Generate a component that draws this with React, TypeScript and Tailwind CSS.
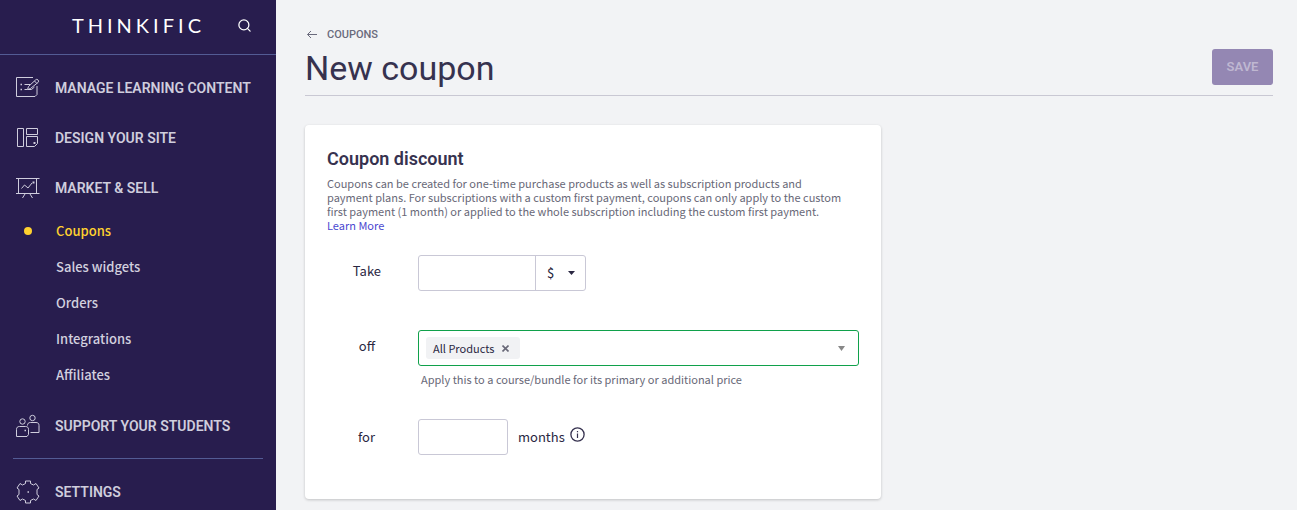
import type { ReactNode } from "react";
import { Search } from "lucide-react";

const bodyFont = "font-['Noto_Sans_CJK_SC',sans-serif]";
const headingFont = "font-['Roboto',sans-serif]";

function NavIcon({ children }: { children: ReactNode }) {
  return (
    <svg
      width="24"
      height="24"
      viewBox="0 0 24 24"
      fill="none"
      stroke="currentColor"
      strokeWidth="1"
      className="shrink-0"
      aria-hidden="true"
    >
      {children}
    </svg>
  );
}

function ContentIcon() {
  return (
    <NavIcon>
      <path d="M17 1.500H.500v19h18.500l2-2V10" />
      <path d="M8.500 8.500H14M8.500 13.500h3" />
      <path d="M4.500 8.500h1.500M4.500 13.500h1.500" strokeWidth="1.500" />
      <path d="M11.500 13.500l1-3 7-6.500a1.700 1.700 0 0 1 2.600 2.400l-7.600 6.100zM18.500 5l2.300 2.400M12 13.500h3.500l3-2.500" />
    </NavIcon>
  );
}

function DesignIcon() {
  return (
    <NavIcon>
      <path d="M1.500 2.500h6v18h-6zM10.500 2.500h11v6h-11zM10.500 10.500h11v7l-3 3h-8z" />
      <path d="M17.500 17h2" strokeWidth="2" />
    </NavIcon>
  );
}

function MarketIcon() {
  return (
    <NavIcon>
      <path d="M0 2.500h23.500M0 17.500h23.500M2.500 2.500v15M20.500 2.500v15" />
      <path d="M5.500 12.500l3-3.500 3.500 3 4-5M9 18l-2.500 4M14 18l2.500 4" />
      <path d="M16.500 6.500h2" strokeWidth="2" />
    </NavIcon>
  );
}

function StudentsIcon() {
  return (
    <NavIcon>
      <circle cx="16.500" cy="4" r="2.700" />
      <circle cx="6.500" cy="7.500" r="2.700" />
      <path d="M.500 22.500v-7c0-2 1-3 3-3h6c2 0 3 1 3 3v5l-1.500 2z" />
      <path d="M11.500 11.500c0-2 1-3 3-3h5.500c2 0 3 1 3 3v7h-8.500" />
      <path d="M8.500 16.500h1.500" strokeWidth="1.500" />
    </NavIcon>
  );
}

function SettingsIcon() {
  return (
    <NavIcon>
      <path d="M9.500 1h5v2.500l3 1.500L20 3.500l3 4.500-2 1.500v5l2 1.500-3 4.500-2.500-1.500-3 1.500V23h-5v-2.500l-3-1.500L4 20.500 1 16l2-1.500v-5L1 8l3-4.500L6.500 5l3-1.500z" />
      <path d="M11.500 12H13" strokeWidth="1.500" />
    </NavIcon>
  );
}

function NavItem({ icon, label }: { icon: ReactNode; label: string }) {
  return (
    <a
      href="#"
      className="flex h-[50px] items-center gap-[15px] pl-4 font-['Roboto',sans-serif] text-sm font-semibold text-[#cfcddd]"
    >
      {icon}
      {label}
    </a>
  );
}

const marketLinks = ["Coupons", "Sales widgets", "Orders", "Integrations", "Affiliates"];

function MarketLinks() {
  return (
    <ul>
      {marketLinks.map((label) => {
        const active = label === "Coupons";
        return (
          <li key={label}>
            <a
              href="#"
              aria-current={active ? "page" : undefined}
              className={`flex h-9 items-center gap-6 pl-6 text-[13px] font-medium ${
                active ? "text-[#ffd12f]" : "text-[#d2d0df]"
              }`}
            >
              <span className={`size-2 rounded-full ${active ? "bg-[#ffd12f]" : ""}`} />
              {label}
            </a>
          </li>
        );
      })}
    </ul>
  );
}

function Sidebar() {
  return (
    <aside className="w-[276px] shrink-0 overflow-hidden bg-[#281d4e]">
      <div className="flex h-[55px] items-center justify-end gap-8 border-b border-[#535b94] pr-6 pb-1 text-white">
        <a href="#" className="font-['Lato',sans-serif] text-xl tracking-[4px]">
          THINKIFIC
        </a>
        <button type="button" aria-label="Search">
          <Search size={15} strokeWidth={2} />
        </button>
      </div>
      <nav className="pt-2">
        <NavItem icon={<ContentIcon />} label="MANAGE LEARNING CONTENT" />
        <NavItem icon={<DesignIcon />} label="DESIGN YOUR SITE" />
        <NavItem icon={<MarketIcon />} label="MARKET & SELL" />
        <MarketLinks />
        <div className="mt-2">
          <NavItem icon={<StudentsIcon />} label="SUPPORT YOUR STUDENTS" />
        </div>
        <hr className="mx-[13px] mt-[7px] mb-2 border-[#535b94]" />
        <NavItem icon={<SettingsIcon />} label="SETTINGS" />
      </nav>
    </aside>
  );
}

function PageHeader() {
  return (
    <header className="flex items-end justify-between border-b border-[#c9c8d3] pb-[10px]">
      <div>
        <a
          href="#"
          className="flex h-4 items-center gap-2 font-['Roboto',sans-serif] text-[11px] font-medium text-[#6a6a7c]"
        >
          <svg width="14" height="12" viewBox="0 0 14 12" fill="none" stroke="currentColor" aria-hidden="true">
            <path d="M2.500 5.500H12M6 2L2.500 5.500 6 9" />
          </svg>
          COUPONS
        </a>
        <h1 className={`${headingFont} -mb-1 pt-1 text-[34px] leading-[42px] text-[#36324f]`}>New coupon</h1>
      </div>
      <button
        type="button"
        disabled
        className="h-9 w-[61px] rounded-[3px] bg-[#9487b3] font-['Roboto',sans-serif] text-[13px] font-semibold text-[#bfb7d1]"
      >
        SAVE
      </button>
    </header>
  );
}

function CouponCard() {
  return (
    <section className="mt-[29px] max-w-[576px] rounded bg-white px-[22px] pt-[22px] pb-11 shadow-[0_1px_3px_rgba(0,0,0,0.2)]">
      <h2 className={`${headingFont} text-lg leading-6 font-semibold text-[#36324f]`}>Coupon discount</h2>
      <p className="mt-[5px] pr-[15px] text-[11px] leading-[14px] text-[#686877]">
        Coupons can be created for one-time purchase products as well as subscription products and payment
        plans. For subscriptions with a custom first payment, coupons can only apply to the custom first
        payment (1 month) or applied to the whole subscription including the custom first payment.{" "}
        <a href="#" className="block text-[#4a48d0]">
          Learn More
        </a>
      </p>

      <div className="mt-[23px] flex text-[13px] text-[#2a2742]">
        <label htmlFor="amount" className="w-[91px] pr-[37px] text-right leading-8">
          Take
        </label>
        <div className="flex h-9 rounded-[3px] border border-[#c9c8d6]">
          <input id="amount" type="text" className="w-[117px] border-r border-[#c9c8d6] px-2 outline-none" />
          <div className="relative flex items-center">
            <select aria-label="Discount type" className="h-full w-[49px] appearance-none pl-[11px] outline-none">
              <option>$</option>
              <option>%</option>
            </select>
            <svg width="7" height="4" viewBox="0 0 7 4" className="pointer-events-none absolute right-[10px]" aria-hidden="true">
              <path d="M0 0h7L3.500 4z" fill="currentColor" />
            </svg>
          </div>
        </div>
      </div>

      <div className="mt-[39px] flex text-[13px] text-[#2a2742]">
        <span id="products-label" className="w-[91px] pr-[43px] text-right leading-8">
          off
        </span>
        <div className="flex-1">
          <div
            role="group"
            aria-labelledby="products-label"
            className="flex h-9 items-center justify-between rounded-[3px] border border-[#10a14b] pr-[13px] pl-[7px]"
          >
            <span className="flex h-[22px] items-center gap-2 rounded-[3px] bg-[#f1f2f4] pr-[11px] pl-[7px] text-[11px]">
              All Products
              <button type="button" aria-label="Remove All Products">
                <svg width="7" height="7" viewBox="0 0 7 7" stroke="#686877" strokeWidth="1.600" aria-hidden="true">
                  <path d="M.500.500l6 6M6.500.500l-6 6" />
                </svg>
              </button>
            </span>
            <button type="button" aria-label="Show products">
              <svg width="7" height="5" viewBox="0 0 7 5" aria-hidden="true">
                <path d="M0 0h7L3.500 5z" fill="#888" />
              </svg>
            </button>
          </div>
          <p className="mt-[5px] mb-px ml-[3px] text-[11px] leading-4 text-[#686877]">
            Apply this to a course/bundle for its primary or additional price
          </p>
        </div>
      </div>

      <div className="mt-[31px] flex text-[13px] text-[#2a2742]">
        <label htmlFor="months" className="w-[91px] pr-[43px] text-right leading-9">
          for
        </label>
        <input
          id="months"
          type="text"
          className="h-9 w-[90px] rounded-[3px] border border-[#c9c8d6] px-2 outline-none"
        />
        <span className="ml-[10px] leading-9">months</span>
        <button type="button" aria-label="More information" className="mb-[6px] ml-[5px]">
          <svg width="15" height="15" viewBox="0 0 15 15" fill="none" stroke="#36324f" aria-hidden="true">
            <circle cx="7.500" cy="7.500" r="6.600" strokeWidth="1.300" />
            <path d="M7.500 6.500v4.500M7.500 4v1.300" strokeWidth="1.200" />
          </svg>
        </button>
      </div>
    </section>
  );
}

export default function App() {
  return (
    <div className={`${bodyFont} flex h-screen bg-[#f2f3f5]`}>
      <Sidebar />
      <main className="min-w-0 flex-1 overflow-y-auto pt-[27px] pr-6 pl-[29px]">
        <PageHeader />
        <CouponCard />
      </main>
    </div>
  );
}
